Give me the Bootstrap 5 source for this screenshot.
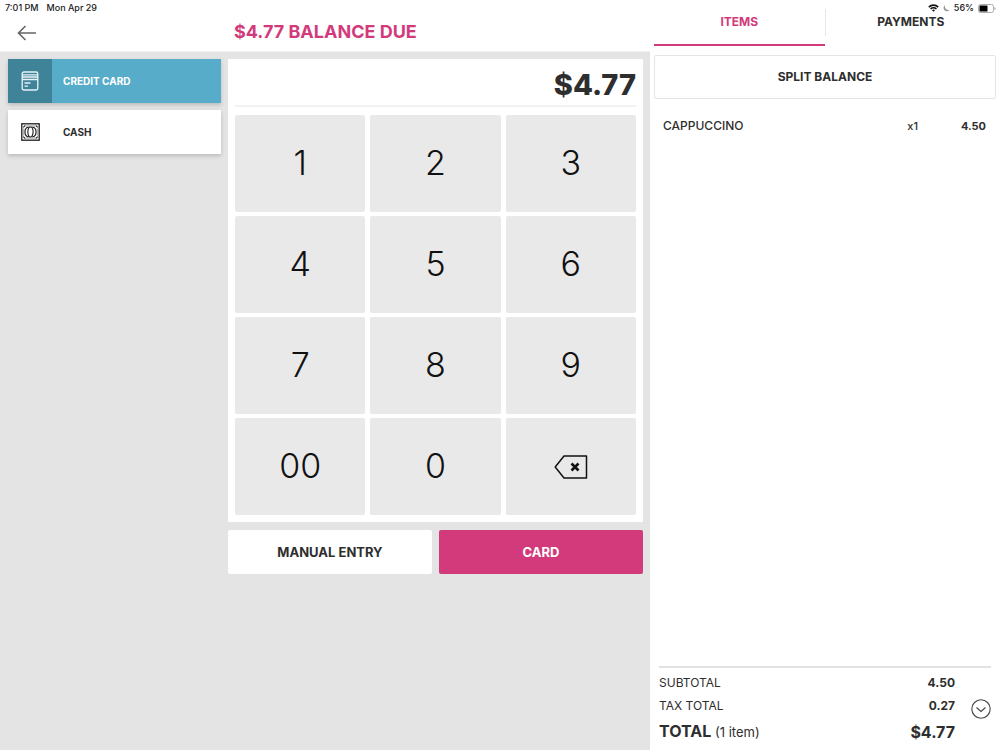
<!DOCTYPE html>
<html lang="en">
<head>
<meta charset="utf-8">
<meta name="viewport" content="width=device-width, initial-scale=1">
<title>Balance due</title>
<link href="https://cdn.jsdelivr.net/npm/bootstrap@5.3.0/dist/css/bootstrap.min.css" rel="stylesheet">
<style>
  :root { --pink: #d23a7b; --ink: #2e2e2e; --line: #e4e4e4; }
  body { font-family: Inter, "Open Sans", sans-serif; color: var(--ink); background: #fff; font-size: 12px; line-height: 16px; }
  .btn { --bs-btn-border-radius: 2px; --bs-btn-font-weight: 700; --bs-btn-line-height: 16px; --bs-btn-padding-y: 0; color: var(--ink); }
  .status-bar { font-size: 9px; line-height: 14px; font-weight: 500; color: #222; padding: 1px 4px 0 5px; pointer-events: none; z-index: 5; }
  .pay-side { width: 65%; background: #e4e4e4; }
  .order-side { width: 35%; padding: 0 4px; }
  .top-strip { height: 52px; background: #fff; border-bottom: 1px solid #f0f0f0; padding: 12px 7px 0 8px; gap: 7px; }
  .methods-col { flex: 213 1 0; min-width: 0; }
  .pad-col { flex: 415 1 0; min-width: 0; }
  .work-area { padding: 7px 7px 7px 8px; gap: 7px; }
  .stack-gap { gap: 7px; }
  .back-btn { padding: 0 9px; height: 42px; }
  .due-title { font-size: 18px; line-height: 40px; font-weight: 700; color: var(--pink); }
  .due-title span { padding-left: 6px; }
  .method { height: 44px; font-size: 10px; background: #fff; border: 0; border-radius: 0; box-shadow: 0 2px 4px rgba(0,0,0,.18); overflow: hidden; padding: 0; gap: 11px; }
  .method:hover { background: #fff; }
  .method .icon-box { width: 44px; height: 44px; }
  .method.chosen { background: #57adc9; color: #fff; }
  .method.chosen .icon-box { background: #3f8398; }
  .pad-panel { background: #fff; padding: 0 7px 7px; }
  .amount { height: 48px; border-bottom: 2px solid #f2f2f2; font-size: 29px; line-height: 52px; font-weight: 800; margin-bottom: 8px; }
  .keys { display: grid; grid-template-columns: repeat(3, 1fr); grid-auto-rows: 97px; gap: 4px 5px; }
  .key { --bs-btn-font-weight: 300; background: #e9e9e9; color: #111; font-size: 34px; border: 0; padding: 0 0 2px; line-height: 40px; }
  .action { height: 44px; font-size: 13px; border: 0; background: #fff; flex: 1 1 0; }
  .action.pay { background: var(--pink); color: #fff; }
  .tabs .nav-link { height: 46px; padding: 0; border-radius: 0; color: var(--ink); font-weight: 700; font-size: 12px; line-height: 44px; text-align: center; border-bottom: 2px solid transparent; }
  .tabs .nav-link.active { color: var(--pink); border-bottom-color: var(--pink); }
  .tab-rule { width: 1px; height: 27px; background: #e8e8e8; margin: 9px 0 0; }
  .split { height: 44px; margin-top: 9px; border: 1px solid var(--line); font-size: 12px; }
  .order-lines { margin: 18px 0 0; width: 100%; }
  .order-lines td { padding: 0; line-height: 18px; }
  .order-lines td:first-child { padding-left: 9px; font-weight: 500; }
  .order-lines .qty { width: 60px; text-align: right; font-weight: 500; font-size: 11px; }
  .order-lines .price { width: 78px; text-align: right; padding-right: 10px; font-weight: 700; font-size: 11px; }
  .sums { border-top: 2px solid #e2e2e2; margin: 0 5px; padding: 3px 0 4px; }
  .sums td { padding: 0; line-height: 23px; }
  .sums td:last-child { text-align: right; font-weight: 700; }
  .sums .grand td { font-size: 16px; line-height: 28px; font-weight: 700; }
  .sums .grand small { font-size: 13px; font-weight: 400; }
  .more-btn { width: 20px; height: 20px; padding: 0; border: 0; }
  svg { display: block; flex-shrink: 0; }
</style>
</head>
<body>
<div class="status-bar position-absolute top-0 start-0 w-100 d-flex justify-content-between">
  <div class="d-flex gap-2"><span>7:01 PM</span><span>Mon Apr 29</span></div>
  <div class="d-flex align-items-center gap-1">
    <svg width="11" height="8" viewBox="0 0 11 8" fill="none" stroke="#111" stroke-width="1.6"><path d="M.8 3.1a6.7 6.7 0 0 1 9.4 0M2.6 5a4.1 4.1 0 0 1 5.800 0"/><path d="M5.500 7.800 4 6.200a2.100 2.100 0 0 1 3 0z" fill="#111" stroke="none"/></svg>
    <svg width="7" height="8" viewBox="0 0 7 8"><path d="M2.300 1A3.600 3.600 0 0 0 6.400 6 3.300 3.300 0 1 1 2.300 1z" fill="#999"/></svg>
    <span>56%</span>
    <svg width="18" height="9" viewBox="0 0 18 9"><rect x=".5" y=".5" width="15" height="8" rx="2" fill="none" stroke="#aaa"/><rect x="1.500" y="1.500" width="8" height="6" rx=".6" fill="#000"/><path d="M16.500 3v3q1-.3 1-1.500t-1-1.500z" fill="#999"/></svg>
  </div>
</div>

<div class="d-flex min-vh-100">
  <main class="pay-side">
    <header class="top-strip d-flex">
      <div class="methods-col">
        <button type="button" class="btn back-btn border-0" aria-label="Back">
          <svg width="20" height="16" viewBox="0 0 20 16" fill="none" stroke="#666" stroke-width="1.6"><path d="M19 8H1.500M8.500 1 1.500 8l7 7"/></svg>
        </button>
      </div>
      <h1 class="pad-col due-title mb-0"><span>$4.77 BALANCE DUE</span></h1>
    </header>

    <div class="work-area d-flex align-items-start">
      <div class="methods-col d-flex flex-column stack-gap">
        <button type="button" class="btn method chosen d-flex align-items-center text-start">
          <span class="icon-box d-flex align-items-center justify-content-center">
            <svg width="18" height="20" viewBox="0 0 18 20" fill="none" stroke="#e8f4f7" stroke-width="1.300"><rect x="1.200" y="1" width="15.600" height="18" rx="1.800"/><path d="M1 3.800h16M1 6h16M1 8.500h16M3.500 12h6M3.500 15.200h3.500"/></svg>
          </span>
          <span>CREDIT CARD</span>
        </button>
        <button type="button" class="btn method d-flex align-items-center text-start">
          <span class="icon-box d-flex align-items-center justify-content-center">
            <svg width="19" height="18" viewBox="0 0 19 18" fill="none" stroke="#1c1c1c" stroke-width="1.100"><rect x=".8" y=".8" width="17.400" height="16.400" stroke-width="1.300"/><path d="M5 3h9M5 15h9M2.800 5.500v7M16.200 5.500v7" stroke="#777" stroke-width=".8"/><path d="m2.300 4.300 2-2M14.700 2.300l2 2M2.300 13.700l2 2M14.700 15.700l2-2"/><ellipse cx="9.500" cy="9" rx="2.600" ry="5"/><path d="M7.800 4.300C5.300 4.300 4 6.500 4 9s1.300 4.700 3.800 4.700M11.200 4.300C13.700 4.300 15 6.500 15 9s-1.300 4.700-3.800 4.700"/></svg>
          </span>
          <span>CASH</span>
        </button>
      </div>

      <div class="pad-col">
        <section class="pad-panel">
          <div class="amount text-end">$4.77</div>
          <div class="keys">
            <button type="button" class="btn key">1</button>
            <button type="button" class="btn key">2</button>
            <button type="button" class="btn key">3</button>
            <button type="button" class="btn key">4</button>
            <button type="button" class="btn key">5</button>
            <button type="button" class="btn key">6</button>
            <button type="button" class="btn key">7</button>
            <button type="button" class="btn key">8</button>
            <button type="button" class="btn key">9</button>
            <button type="button" class="btn key">00</button>
            <button type="button" class="btn key">0</button>
            <button type="button" class="btn key d-flex align-items-center justify-content-center pb-0" aria-label="Delete">
              <svg width="34" height="24" viewBox="0 0 34 24" fill="none" stroke="#111" stroke-width="1.500" stroke-linejoin="round"><path d="M1.200 12 10 1h22.500v22H10z"/><path d="m17.500 8.500 7 7m0-7-7 7" stroke-width="2.600"/></svg>
            </button>
          </div>
        </section>
        <div class="d-flex stack-gap mt-2">
          <button type="button" class="btn action">MANUAL ENTRY</button>
          <button type="button" class="btn action pay">CARD</button>
        </div>
      </div>
    </div>
  </main>

  <aside class="order-side d-flex flex-column">
    <nav class="tabs d-flex">
      <a class="nav-link active w-50" href="#items">ITEMS</a>
      <span class="tab-rule"></span>
      <a class="nav-link w-50" href="#payments">PAYMENTS</a>
    </nav>
    <button type="button" class="btn split">SPLIT BALANCE</button>
    <table class="order-lines" id="items">
      <tbody><tr><td>CAPPUCCINO</td><td class="qty">x1</td><td class="price">4.50</td></tr></tbody>
    </table>
    <footer class="sums mt-auto d-flex align-items-center">
      <table class="flex-fill">
        <tbody>
          <tr><td>SUBTOTAL</td><td>4.50</td></tr>
          <tr><td>TAX TOTAL</td><td>0.27</td></tr>
          <tr class="grand"><td>TOTAL <small>(1 item)</small></td><td>$4.77</td></tr>
        </tbody>
      </table>
      <button type="button" class="btn more-btn ms-3" aria-label="Show details">
        <svg width="20" height="20" viewBox="0 0 20 20" fill="none" stroke="#444" stroke-width="1.100"><circle cx="10" cy="10" r="9.200"/><path d="m5.500 8.500 4.500 4 4.500-4"/></svg>
      </button>
    </footer>
  </aside>
</div>
<script src="https://cdn.jsdelivr.net/npm/bootstrap@5.3.0/dist/js/bootstrap.bundle.min.js"></script>
</body>
</html>
